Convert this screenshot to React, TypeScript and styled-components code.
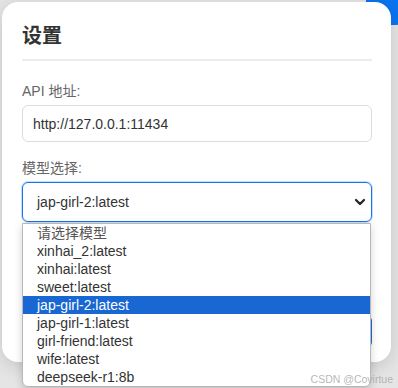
// Dependencies.
import styled, {createGlobalStyle} from 'styled-components'

// Global.
const GlobalStyle = createGlobalStyle`
  html, body {
    margin: 0;
    padding: 0;
    background: #e5e5e5;
  }

  body {
    font-family: "Liberation Sans", Arial, "Noto Sans CJK SC", sans-serif;
  }
`

// Page.
const Page = styled.div`
  background: #e5e5e5;
  box-sizing: border-box;
  height: 388px;
  overflow: hidden;
  padding: 2px 0 0 2px;
  position: relative;
  width: 398px;
`

// Behind Button (page content under the overlay).
const BehindButton = styled.div`
  background: #0b74f0;
  border-radius: 14px;
  height: 46px;
  position: absolute;
  right: -12px;
  top: -21px;
  width: 44px;
`

// Card.
const Card = styled.div`
  background: #fff;
  border-radius: 16px;
  box-shadow: 0 4px 18px rgba(0, 0, 0, .14);
  box-sizing: border-box;
  display: flex;
  flex-direction: column;
  height: 360px;
  padding: 20px 19px 0 20px;
  position: relative;
  width: 389px;
`

const Title = styled.h2`
  color: #333;
  font-size: 20px;
  font-weight: 700;
  line-height: 28px;
  margin: 0 0 9px;
`

const Divider = styled.div`
  background: #ececec;
  height: 2px;
`

const Label = styled.label<{$first?: boolean}>`
  color: #666;
  font-size: 14px;
  line-height: 20px;
  margin: ${p => p.$first ? '20px' : '16px'} 0 4px;
`

const Input = styled.div`
  align-items: center;
  border: 1px solid #dcdcdc;
  border-radius: 6px;
  box-sizing: border-box;
  color: #333;
  display: flex;
  font-size: 14px;
  height: 37px;
  padding: 0 10px;
`

const SelectWrap = styled.div`
  position: relative;
`

const Select = styled.div`
  align-items: center;
  border: 1px solid #1a73e8;
  border-radius: 6px;
  box-shadow: 0 0 0 1px rgba(26, 115, 232, .25);
  box-sizing: border-box;
  color: #333;
  display: flex;
  font-size: 14px;
  height: 40px;
  justify-content: space-between;
  padding: 0 5px 0 14px;
`

const Chevron = styled.svg`
  height: 12px;
  width: 12px;
`

const SaveButton = styled.div`
  background: #1a6fe0;
  border-radius: 6px;
  height: 33px;
  margin-top: 93px;
`

// Dropdown list (native popup).
const List = styled.ul`
  background: #fff;
  border: 1px solid #b8b8b8;
  border-radius: 0 0 6px 6px;
  box-shadow: 0 3px 8px rgba(0, 0, 0, .18);
  left: 0;
  list-style: none;
  margin: 0;
  padding: 0;
  position: absolute;
  right: 1px;
  top: calc(100% + 1px);
  z-index: 10;
`

const Option = styled.li<{$active?: boolean, $muted?: boolean}>`
  background: ${p => p.$active ? '#1967d2' : 'transparent'};
  color: ${p => p.$active ? '#fff' : p.$muted ? '#555' : '#333'};
  font-size: 14px;
  height: 18px;
  line-height: 18px;
  padding-left: 14px;
`

const Watermark = styled.div`
  bottom: 3px;
  color: rgba(170, 170, 170, .85);
  font-size: 10.5px;
  position: absolute;
  right: 5px;
  z-index: 20;
`

// Models.
const models = [
  'xinhai_2:latest',
  'xinhai:latest',
  'sweet:latest',
  'jap-girl-2:latest',
  'jap-girl-1:latest',
  'girl-friend:latest',
  'wife:latest',
  'deepseek-r1:8b',
]

const selected = 'jap-girl-2:latest'

// App.
export default function App() {
  return <Page>
    <GlobalStyle/>

    <BehindButton/>

    <Card>

      {/* Title. */}
      <Title>设置</Title>
      <Divider/>

      {/* API. */}
      <Label $first>API 地址:</Label>
      <Input>http://127.0.0.1:11434</Input>

      {/* Model. */}
      <Label>模型选择:</Label>
      <SelectWrap>
        <Select>
          {selected}
          <Chevron viewBox="0 0 12 12">
            <path d="M2 4l4 4 4-4" fill="none" stroke="#222" strokeWidth="2.2" strokeLinecap="round" strokeLinejoin="round"/>
          </Chevron>
        </Select>

        <List>
          <Option $muted>请选择模型</Option>
          {models.map(model => <Option key={model} $active={model === selected}>{model}</Option>)}
        </List>
      </SelectWrap>

      <SaveButton/>

    </Card>

    <Watermark>CSDN @Covirtue</Watermark>
  </Page>
}
